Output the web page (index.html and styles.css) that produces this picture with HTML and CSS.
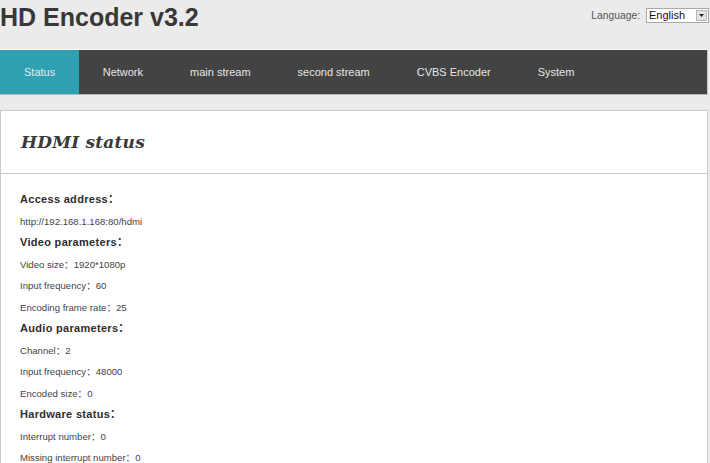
FILE: index.html
```html
<!DOCTYPE html>
<html>
<head>
<meta charset="utf-8">
<title>HD Encoder v3.2</title>
<link rel="stylesheet" href="styles.css">
</head>
<body>
<div class="page">
  <header class="top">
    <h1 class="brand">HD Encoder v3.2</h1>
    <div class="lang">
      <span class="lang-label">Language:</span>
      <div class="select">
        <span class="select-value">English</span>
        <span class="select-btn"><svg width="7" height="4" viewBox="0 0 7 4"><path d="M0 0H7L3.5 4Z" fill="#222"/></svg></span>
      </div>
    </div>
  </header>
  <nav class="nav">
    <a class="tab active">Status</a>
    <a class="tab">Network</a>
    <a class="tab">main stream</a>
    <a class="tab">second stream</a>
    <a class="tab">CVBS Encoder</a>
    <a class="tab">System</a>
  </nav>
  <section class="card">
    <div class="card-head"><h2 class="card-title">HDMI status</h2></div>
    <div class="card-body">
      <p class="group">Access address：</p>
      <p class="item">http://192.168.1.168:80/hdmi</p>
      <p class="group">Video parameters：</p>
      <p class="item">Video size：1920*1080p</p>
      <p class="item">Input frequency：60</p>
      <p class="item">Encoding frame rate：25</p>
      <p class="group">Audio parameters：</p>
      <p class="item">Channel：2</p>
      <p class="item">Input frequency：48000</p>
      <p class="item">Encoded size：0</p>
      <p class="group">Hardware status：</p>
      <p class="item">Interrupt number：0</p>
      <p class="item">Missing interrupt number：0</p>
    </div>
  </section>
</div>
</body>
</html>
```
FILE: styles.css
```css
html, body {
  margin: 0;
  padding: 0;
  background: #ebebeb;
  font-family: "Liberation Sans", Arial, "Noto Sans CJK SC", sans-serif;
  color: #333;
  overflow: hidden;
}
.page {
  width: 708px;
}
.top {
  display: flex;
  justify-content: space-between;
  align-items: flex-start;
  height: 49px;
}
.brand {
  margin: 2px 0 0 0;
  font-size: 25px;
  font-weight: bold;
  line-height: 30px;
  color: #383838;
}
.lang {
  display: flex;
  align-items: center;
  gap: 6px;
  margin-top: 8px;
  margin-right: -1px;
}
.lang-label {
  font-size: 10.3px;
  color: #555;
}
.select {
  display: flex;
  align-items: stretch;
  width: 61px;
  height: 13px;
  border: 1px solid #a8a8a8;
  background: #fff;
}
.select-value {
  flex: 1;
  font-size: 11px;
  line-height: 13px;
  padding-left: 2px;
  color: #111;
}
.select-btn {
  width: 11px;
  margin: 1px;
  background: #e4e4e4;
  border: 1px solid #b8b8b8;
  box-sizing: border-box;
  display: flex;
  align-items: center;
  justify-content: center;
}
.select-btn svg { width: 5px; height: 3px; }
.nav {
  display: flex;
  height: 44px;
  background: #434343;
  border-top: 1px solid #fafafa;
  border-bottom: 1px solid #b5b5b5;
  border-right: 1px solid #c8c8c8;
}
.tab {
  display: block;
  padding: 0 23.5px;
  font-size: 11px;
  line-height: 44px;
  color: #e6e6e6;
}
.tab.active {
  background: #2fa1b3;
  padding: 0 24px;
}
.card {
  margin-top: 15px;
  background: #fff;
  border: 1px solid #c9c9c9;
  border-bottom: 0;
}
.card-head {
  height: 62px;
  border-bottom: 1px solid #c6c6c6;
  display: flex;
  align-items: center;
  padding-left: 20px;
}
.card-title {
  margin: 0;
  font-family: "DejaVu Serif", Georgia, serif;
  font-style: italic;
  font-weight: bold;
  font-size: 17px;
  color: #3a3a3a;
  letter-spacing: 0.2px;
}
.card-body {
  padding: 15px 0 0 19px;
}
.group {
  margin: 0;
  font-size: 11px;
  font-weight: bold;
  line-height: 21.5px;
  color: #2e2e2e;
  letter-spacing: 0.3px;
}
.item {
  margin: 0;
  font-size: 9.6px;
  line-height: 21.5px;
  color: #444;
}
```
